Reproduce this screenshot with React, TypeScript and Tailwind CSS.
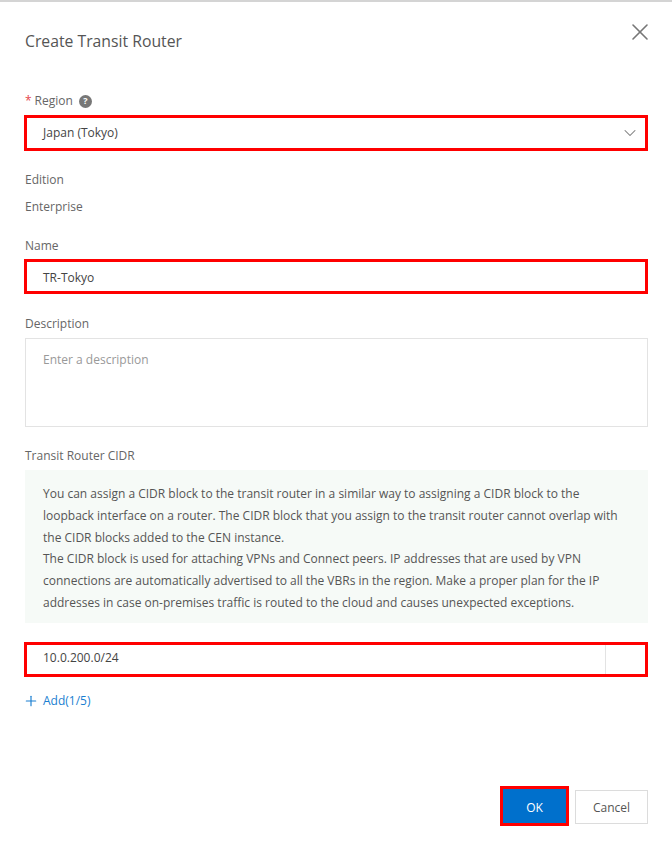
import { ChevronDown, Plus, X } from 'lucide-react';

const labelClass = 'text-[12px] leading-[16px] text-[#666]';
const redBoxClass = 'border-[3px] border-[#f00] bg-white';

const App = () => {
  return (
    <div className="w-[672px] h-[850px] bg-white overflow-hidden border-t-2 border-[#d4d4d4] font-['Open_Sans',sans-serif] text-[#444]">
      <div className="pl-[25px] pr-[24px]">
        <div className="flex items-start justify-between h-[91px]">
          <h2 className="mt-[29px] text-[15.75px] leading-[20px] text-[#555]">Create Transit Router</h2>
          <button className="mt-[16px] -mr-[6px] text-[#777]">
            <X size={28} strokeWidth={1.4} />
          </button>
        </div>

        <div className="flex items-center h-[16px]">
          <span className="text-[12px] text-[#e5484d] mr-[3px]">*</span>
          <span className={labelClass}>Region</span>
          <span className="ml-[6px] w-[13px] h-[13px] rounded-full bg-[#777] text-white text-[9px] font-bold flex items-center justify-center">
            ?
          </span>
        </div>
        <div className={`mt-[6px] -ml-[1px] h-[36px] flex items-center justify-between pl-[16px] pr-[5px] ${redBoxClass}`}>
          <span className="text-[12px] text-[#444]">Japan (Tokyo)</span>
          <ChevronDown size={20} strokeWidth={1.25} className="text-[#777]" />
        </div>

        <div className={`mt-[21px] ${labelClass}`}>Edition</div>
        <div className={`mt-[11px] ${labelClass}`}>Enterprise</div>

        <div className={`mt-[23px] ${labelClass}`}>Name</div>
        <div className={`mt-[5px] -ml-[1px] h-[35px] flex items-center pl-[16px] pt-[3px] ${redBoxClass}`}>
          <span className="text-[12px] text-[#444]">TR-Tokyo</span>
        </div>

        <div className={`mt-[22px] ${labelClass}`}>Description</div>
        <div className="mt-[6px] h-[89px] border border-[#e3e3e3] pl-[17px] pt-[13px] text-[12px] leading-[16px] text-[#999]">
          Enter a description
        </div>

        <div className={`mt-[21px] ${labelClass}`}>Transit Router CIDR</div>
        <div className="mt-[6px] h-[153px] bg-[#f6faf7] pl-[18px] pr-[23px] pt-[13px] text-[12px] leading-[21.8px] text-[#555]">
          <p>You can assign a CIDR block to the transit router in a similar way to assigning a CIDR block to the loopback interface on a router. The CIDR block that you assign to the transit router cannot overlap with the CIDR blocks added to the CEN instance.</p>
          <p>The CIDR block is used for attaching VPNs and Connect peers. IP addresses that are used by VPN connections are automatically advertised to all the VBRs in the region. Make a proper plan for the IP addresses in case on-premises traffic is routed to the cloud and causes unexpected exceptions.</p>
        </div>

        <div className={`mt-[19px] -ml-[1px] h-[35px] flex items-stretch ${redBoxClass}`}>
          <div className="flex-1 flex items-center pl-[16px] pb-[4px] text-[12px] text-[#444]">10.0.200.0/24</div>
          <div className="w-[40px] border-l border-[#e3e3e3]" />
        </div>

        <div className="mt-[16px] flex items-center text-[#1b7fd1]">
          <Plus size={16} strokeWidth={1.75} className="-ml-[2px]" />
          <span className="ml-[4px] text-[12px] leading-[16px]">Add(1/5)</span>
        </div>

        <div className="mt-[77px] flex items-center justify-end">
          <button className="w-[69px] h-[40px] pt-[3px] border-[3px] border-[#f00] bg-[#0070cc] text-white text-[12px]">OK</button>
          <button className="ml-[6px] mt-[2px] w-[73px] h-[34px] pt-[1px] border border-[#dcdcdc] bg-white text-[#555] text-[12px]">Cancel</button>
        </div>
      </div>
    </div>
  );
};

export default App;
